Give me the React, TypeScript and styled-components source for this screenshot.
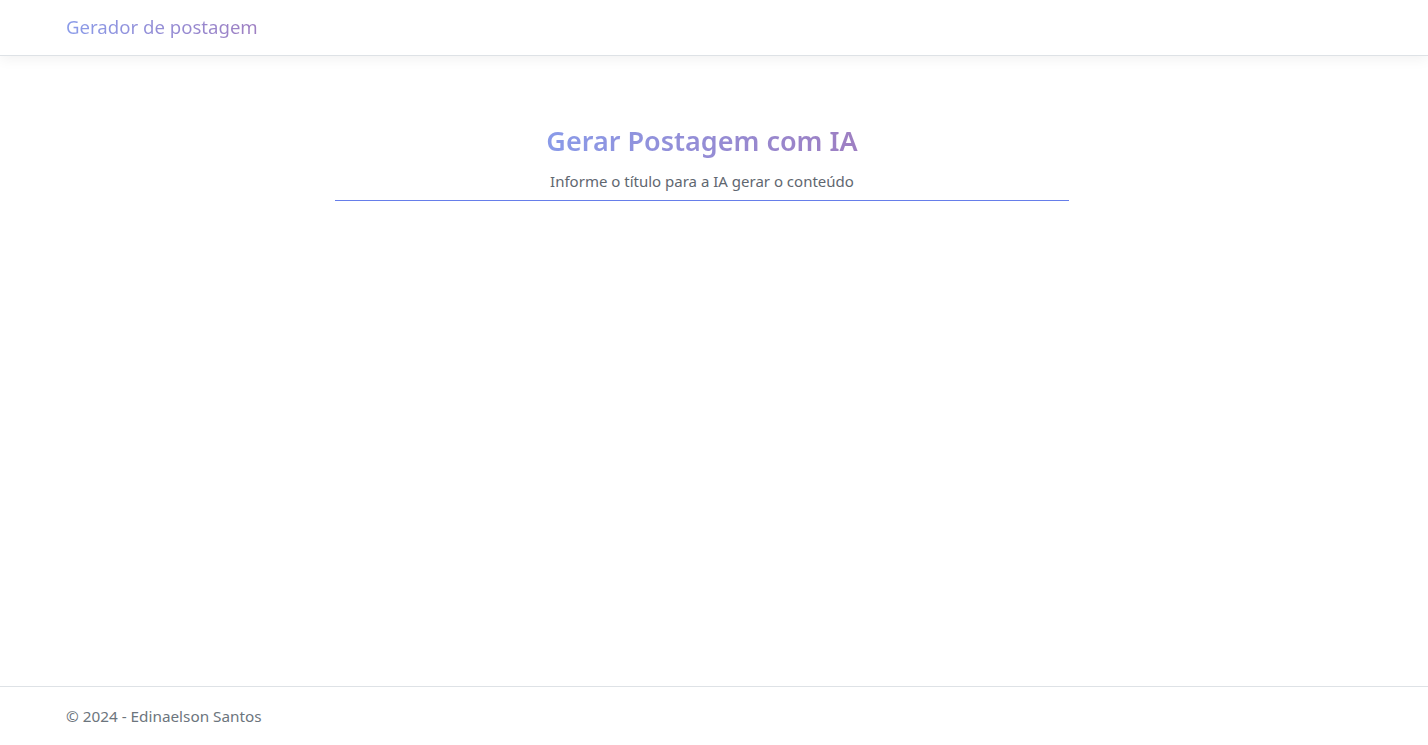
import React from "react";
import styled, { createGlobalStyle } from "styled-components";

const Global = createGlobalStyle`
  html, body { margin: 0; padding: 0; }
  body {
    font-family: "Noto Sans", "Open Sans", sans-serif;
    font-size: 16px;
    color: #212529;
    background: #fff;
  }
  #root { min-height: 745px; position: relative; }
`;

const Page = styled.div`
  min-height: 745px;
  position: relative;
  display: flex;
  flex-direction: column;
`;

const Header = styled.header`
  height: 55px;
  border-bottom: 1px solid #dee2e6;
  box-shadow: 0 0.25rem 0.75rem rgba(0, 0, 0, 0.05);
  background: #fff;
  display: flex;
  align-items: center;
`;

const Container = styled.div`
  width: 1296px;
  margin: 0 auto;
  padding: 0 12px;
`;

const GradientText = styled.span`
  background: linear-gradient(90deg, #8a9be9, #9e7fc2);
  -webkit-background-clip: text;
  background-clip: text;
  color: transparent;
`;

const Brand = styled(GradientText)`
  font-size: 18.6px;
  line-height: 1;
  display: inline-block;
  padding-bottom: 2px;
`;

const Main = styled.main`
  flex: 1;
  display: flex;
  flex-direction: column;
  align-items: center;
  padding-top: 66px;
  margin-left: -24px;
`;

const Title = styled.h2`
  margin: 0;
  font-size: 27px;
  font-weight: 600;
  line-height: 38px;
  text-align: center;
`;

const TitleInput = styled.input`
  margin-top: 6px;
  width: 734px;
  box-sizing: border-box;
  border: 0;
  border-bottom: 1px solid #667eea;
  outline: none;
  background: transparent;
  text-align: center;
  font-family: inherit;
  font-size: 15px;
  padding: 5px 0 9px;
  color: #495057;
  &::placeholder { color: #5f6770; opacity: 1; }
`;

const Footer = styled.footer`
  border-top: 1px solid #dee2e6;
  height: 58px;
  display: flex;
  align-items: center;
  color: #6c757d;
  font-size: 15.3px;
`;

export default function App() {
  return (
    <Page>
      <Global />
      <Header>
        <Container>
          <Brand>Gerador de postagem</Brand>
        </Container>
      </Header>
      <Main>
        <Title>
          <GradientText>Gerar Postagem com IA</GradientText>
        </Title>
        <TitleInput placeholder="Informe o título para a IA gerar o conteúdo" />
      </Main>
      <Footer>
        <Container>© 2024 - Edinaelson Santos</Container>
      </Footer>
    </Page>
  );
}
